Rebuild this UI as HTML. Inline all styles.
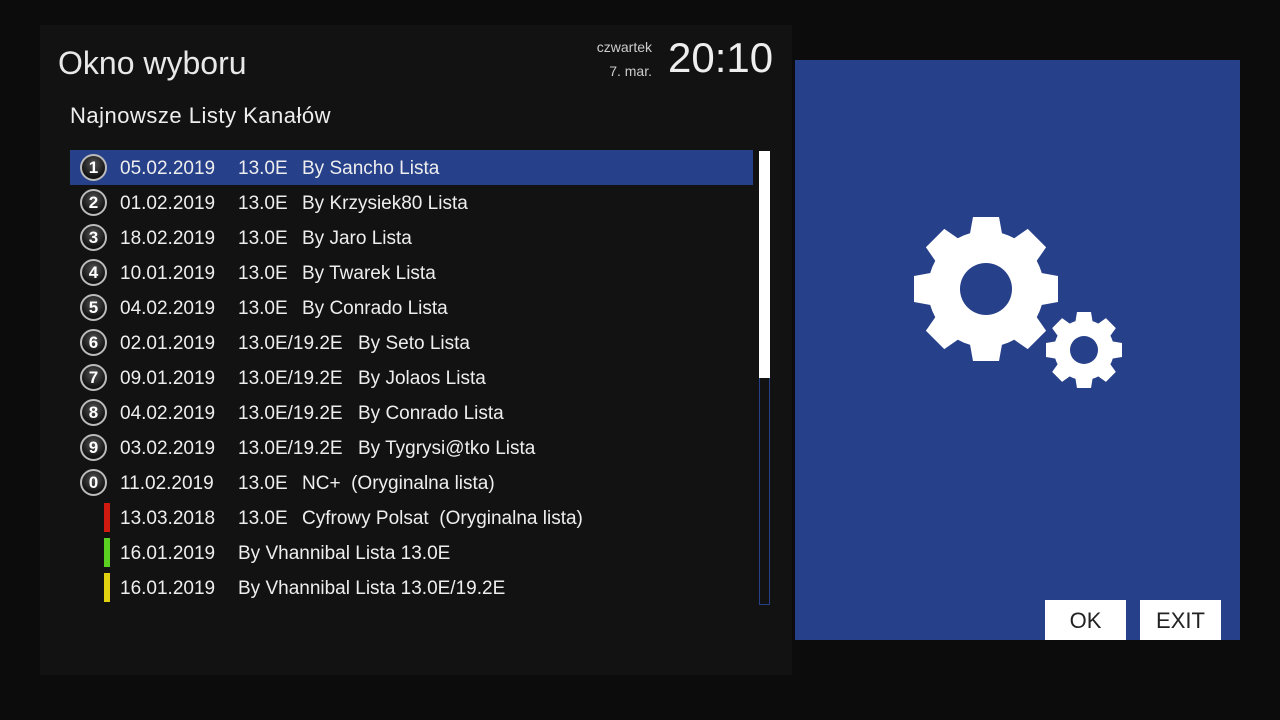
<!DOCTYPE html>
<html><head><meta charset="utf-8"><style>
body{margin:0;width:1280px;height:720px;background:#0c0c0c;font-family:"Liberation Sans",sans-serif;color:#eee;position:relative;overflow:hidden}
.panel{position:absolute;left:40px;top:25px;width:752px;height:650px;background:#121212}
.t{position:absolute;white-space:nowrap}
.row{position:absolute;left:70px;width:683px;height:35px;font-size:19px;line-height:37px}
.row.sel{background:#26408a}
.num{position:absolute;left:10px;top:4px;width:27px;height:27px;border-radius:50%;background:radial-gradient(circle at 50% 35%,#555,#111 70%);border:2px solid #bbb;box-sizing:border-box;color:#fff;font-weight:bold;font-size:17px;line-height:23px;text-align:center}
.bar{position:absolute;left:34px;top:3px;width:6px;height:29px}
.row span{position:absolute}
.btn{position:absolute;top:600px;height:40px;background:#fff;color:#222;font-size:22px;line-height:42px;text-align:center}
</style></head><body>
<div class="panel"></div>
<div class="t" style="left:58px;top:45px;font-size:32px;color:#e8e8e8">Okno wyboru</div>
<div class="t" style="left:70px;top:103px;font-size:22px;letter-spacing:0.5px">Najnowsze Listy Kanałów</div>
<div class="t" style="left:560px;top:39px;width:92px;text-align:right;font-size:14px;color:#ccc">czwartek</div>
<div class="t" style="left:560px;top:63px;width:92px;text-align:right;font-size:14px;color:#ccc">7. mar.</div>
<div class="t" style="left:668px;top:34px;font-size:42px">20:10</div>

<div class="row sel" style="top:150px"><div class="num">1</div><span style="left:50px">05.02.2019</span><span style="left:168px">13.0E</span><span style="left:232px">By Sancho Lista</span></div>
<div class="row" style="top:185px"><div class="num">2</div><span style="left:50px">01.02.2019</span><span style="left:168px">13.0E</span><span style="left:232px">By Krzysiek80 Lista</span></div>
<div class="row" style="top:220px"><div class="num">3</div><span style="left:50px">18.02.2019</span><span style="left:168px">13.0E</span><span style="left:232px">By Jaro Lista</span></div>
<div class="row" style="top:255px"><div class="num">4</div><span style="left:50px">10.01.2019</span><span style="left:168px">13.0E</span><span style="left:232px">By Twarek Lista</span></div>
<div class="row" style="top:290px"><div class="num">5</div><span style="left:50px">04.02.2019</span><span style="left:168px">13.0E</span><span style="left:232px">By Conrado Lista</span></div>
<div class="row" style="top:325px"><div class="num">6</div><span style="left:50px">02.01.2019</span><span style="left:168px">13.0E/19.2E</span><span style="left:288px">By Seto Lista</span></div>
<div class="row" style="top:360px"><div class="num">7</div><span style="left:50px">09.01.2019</span><span style="left:168px">13.0E/19.2E</span><span style="left:288px">By Jolaos Lista</span></div>
<div class="row" style="top:395px"><div class="num">8</div><span style="left:50px">04.02.2019</span><span style="left:168px">13.0E/19.2E</span><span style="left:288px">By Conrado Lista</span></div>
<div class="row" style="top:430px"><div class="num">9</div><span style="left:50px">03.02.2019</span><span style="left:168px">13.0E/19.2E</span><span style="left:288px">By Tygrysi@tko Lista</span></div>
<div class="row" style="top:465px"><div class="num">0</div><span style="left:50px">11.02.2019</span><span style="left:168px">13.0E</span><span style="left:232px">NC+ &nbsp;(Oryginalna lista)</span></div>
<div class="row" style="top:500px"><div class="bar" style="background:#d01a10"></div><span style="left:50px">13.03.2018</span><span style="left:168px">13.0E</span><span style="left:232px">Cyfrowy Polsat &nbsp;(Oryginalna lista)</span></div>
<div class="row" style="top:535px"><div class="bar" style="background:#5ad020"></div><span style="left:50px">16.01.2019</span><span style="left:168px">By Vhannibal Lista 13.0E</span></div>
<div class="row" style="top:570px"><div class="bar" style="background:#e0d010"></div><span style="left:50px">16.01.2019</span><span style="left:168px">By Vhannibal Lista 13.0E/19.2E</span></div>

<div style="position:absolute;left:759px;top:151px;width:11px;height:454px;border:1px solid #26408a;box-sizing:border-box"></div>
<div style="position:absolute;left:759px;top:151px;width:11px;height:227px;background:#fff"></div>

<div style="position:absolute;left:795px;top:60px;width:445px;height:580px;background:#26408a"></div>
<svg style="position:absolute;left:795px;top:60px" width="445" height="580">
<g fill="#fff">
<g transform="translate(191,229)">
<circle r="58"/>
<g id="t"><path d="M-13,-72 L13,-72 L17,-50 L-17,-50Z"/></g>
<use href="#t" transform="rotate(45)"/><use href="#t" transform="rotate(90)"/><use href="#t" transform="rotate(135)"/><use href="#t" transform="rotate(180)"/><use href="#t" transform="rotate(225)"/><use href="#t" transform="rotate(270)"/><use href="#t" transform="rotate(315)"/>
<circle r="26" fill="#26408a"/>
</g>
<g transform="translate(289,290)">
<circle r="30"/>
<g id="s"><path d="M-7,-38 L7,-38 L9,-26 L-9,-26Z"/></g>
<use href="#s" transform="rotate(45)"/><use href="#s" transform="rotate(90)"/><use href="#s" transform="rotate(135)"/><use href="#s" transform="rotate(180)"/><use href="#s" transform="rotate(225)"/><use href="#s" transform="rotate(270)"/><use href="#s" transform="rotate(315)"/>
<circle r="14" fill="#26408a"/>
</g>
</g>
</svg>
<div class="btn" style="left:1045px;width:81px">OK</div>
<div class="btn" style="left:1140px;width:81px">EXIT</div>
</body></html>
